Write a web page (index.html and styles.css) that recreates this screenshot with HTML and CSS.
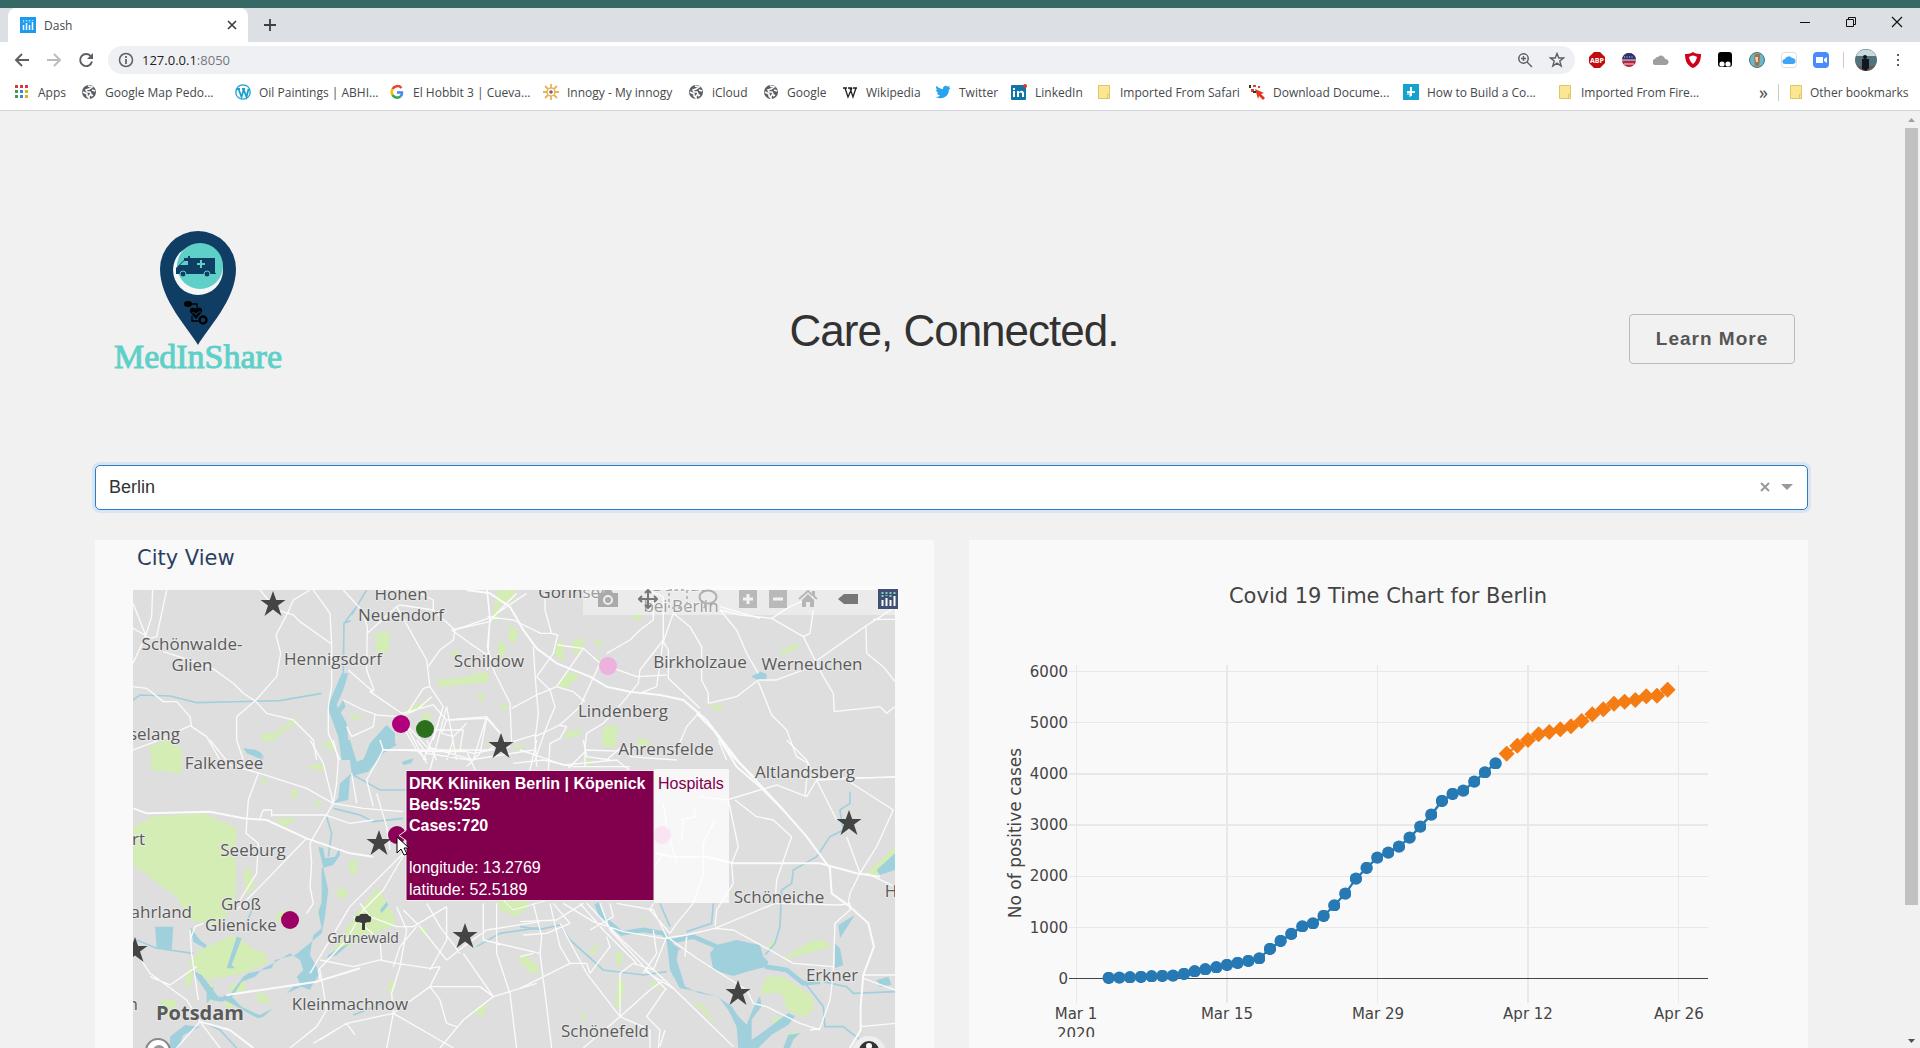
FILE: index.html
```html
<!DOCTYPE html>
<html lang="en">
<head>
<meta charset="utf-8">
<title>Dash</title>
<link rel="stylesheet" href="styles.css">
</head>
<body>
<svg class="defs" width="0" height="0" aria-hidden="true">
  <defs>
    <symbol id="globe" viewBox="0 0 16 16"><circle cx="8" cy="8" r="7" fill="#5b5e63"/><path d="M7 2 11 3 8 5 5 6 6 8 9 8 10 10 8 12 8 14 6 12 6 10 2 8M11 6 14 7M10 12 12 11" fill="none" stroke="#fff" stroke-width="1.6"/></symbol>
    <symbol id="folder" viewBox="0 0 16 16"><path d="M2.500 1.500h11v13h-11z" fill="#fbe694" stroke="#e0c765"/><path d="M11.500 14.500v-4h2v4z" fill="#fbe694" stroke="#e0c765"/></symbol>
    <symbol id="star" viewBox="-13 -13 26 26"><path d="M0-13 3.200-4H12.500L5 1.500 8.500 12 0 5.500-8.500 12-5 1.500-12.500-4H-3.200Z" fill="#444"/></symbol>
  </defs>
</svg>
<div class="desktop-strip"></div>
<header class="browser">
  <div class="tabs">
    <div class="tab">
      <svg width="16" height="16" viewBox="0 0 16 16"><path fill="#1c9af0" d="M0 0h16v16H0z"/><path stroke="#fff" stroke-width="1.500" d="M3.500 8v5M6.500 6v7M9.500 8v5M12.500 5v8"/><path stroke="#9fe6ff" stroke-width="1.500" stroke-dasharray="1.500 1" d="M3.500 3v3M6.500 3v2M9.500 3v3M12.500 3v1"/></svg>
      <span class="tab-title">Dash</span>
      <button class="bare" aria-label="Close tab"><svg width="16" height="16" viewBox="0 0 16 16"><path d="M4 4l8 8M12 4l-8 8" stroke="#3c4043" stroke-width="1.700"/></svg></button>
    </div>
    <button class="bare new-tab" aria-label="New tab"><svg width="16" height="16" viewBox="0 0 16 16"><path d="M8 2v12M2 8h12" stroke="#3c4043" stroke-width="1.800"/></svg></button>
    <div class="window-controls">
      <button class="bare" aria-label="Minimize"><svg width="14" height="14" viewBox="0 0 14 14"><path d="M2 7.500h10" stroke="#111"/></svg></button>
      <button class="bare" aria-label="Restore"><svg width="14" height="14" viewBox="0 0 14 14"><path d="M2.500 4.500h7v7h-7zM4.500 4.500v-2h7v7h-2" fill="none" stroke="#111"/></svg></button>
      <button class="bare" aria-label="Close"><svg width="14" height="14" viewBox="0 0 14 14"><path d="M2 2l10 10M12 2L2 12" stroke="#111" stroke-width="1.200"/></svg></button>
    </div>
  </div>
  <div class="toolbar">
    <div class="nav">
      <button class="bare" aria-label="Back"><svg width="16" height="16" viewBox="0 0 16 16"><path d="M15 8H2M8 2 2 8l6 6" fill="none" stroke="#5b5e63" stroke-width="1.900"/></svg></button>
      <button class="bare" aria-label="Forward"><svg width="16" height="16" viewBox="0 0 16 16"><path d="M1 8h13M8 2l6 6-6 6" fill="none" stroke="#b9bbbe" stroke-width="1.900"/></svg></button>
      <button class="bare" aria-label="Reload"><svg width="16" height="16" viewBox="0 0 16 16"><path d="M13 4.500A6 6 0 1 0 14 9.500" fill="none" stroke="#5b5e63" stroke-width="1.900"/><path d="M15 1v6H9z" fill="#5b5e63"/></svg></button>
    </div>
    <div class="address">
      <svg width="16" height="16" viewBox="0 0 16 16"><circle cx="8" cy="8" r="6.500" fill="none" stroke="#5b5e63" stroke-width="1.500"/><path d="M8 7v5M8 4v2" stroke="#5b5e63" stroke-width="1.700"/></svg>
      <span class="url">127.0.0.1<span class="port">:8050</span></span>
      <button class="bare" aria-label="Zoom"><svg width="16" height="16" viewBox="0 0 16 16"><circle cx="6.500" cy="6.500" r="4.700" fill="none" stroke="#5b5e63" stroke-width="1.500"/><path d="M10 10l5 5M4 6.500h5M6.500 4v5" stroke="#5b5e63" stroke-width="1.400"/></svg></button>
      <button class="bare" aria-label="Bookmark this page"><svg width="16" height="16" viewBox="0 0 16 16"><path d="M8 1.500 9.800 6h4.700l-3.700 3 1.400 5L8 11.200 3.800 14l1.400-5L1.500 6h4.700z" fill="none" stroke="#5b5e63" stroke-width="1.400"/></svg></button>
    </div>
    <div class="extensions">
      <svg viewBox="0 0 16 16"><path d="M5 0h6l5 5v6l-5 5H5l-5-5V5z" fill="#c00d0d"/><text x="8" y="11" font-size="7" font-weight="700" fill="#fff" text-anchor="middle">ABP</text></svg>
      <svg viewBox="0 0 16 16"><circle cx="8" cy="8" r="7" fill="#b2273f"/><path d="M1 8a7 7 0 0 1 14 0z" fill="#2c3470"/><path d="M1 8h14M3 12h10" stroke="#e5e0ee"/><path d="M3 5h10" stroke="#e5e0ee" stroke-dasharray="1 1.500"/></svg>
      <svg viewBox="0 0 16 16"><path d="M3 13a3 3 0 0 1-1-6 3 3 0 0 1 3-2 4 4 0 0 1 7 2 3 3 0 0 1 1 6z" fill="#9e9e9e"/></svg>
      <svg viewBox="0 0 16 16"><path d="M8 0C11 2 14 2 16 2 16 10 13 14 8 16 3 14 0 10 0 2 2 2 5 2 8 0z" fill="#d0021b"/><path d="M4 5Q8 2 12 5 11 10 8 12 5 10 4 5z" fill="#fff"/></svg>
      <svg viewBox="0 0 16 16"><rect x="1" width="14" height="15" rx="3" fill="#000"/><circle cx="5" cy="12" r="2.600" fill="#fff"/><circle cx="11" cy="12" r="2.600" fill="#fff"/></svg>
      <svg viewBox="0 0 16 16"><circle cx="8" cy="8" r="7.500" fill="#6ab7c8" stroke="#4a7078"/><path d="M6 2h5v5l-1 7H6L5 5z" fill="#a5744f"/><path d="M6 5h3v5H7z" fill="#e4d7b6"/></svg>
      <svg viewBox="0 0 16 16"><rect x=".5" y=".5" width="15" height="15" rx="3" fill="#fff" stroke="#ddd"/><path d="M4 12a2.500 2.500 0 0 1 0-5 4 4 0 0 1 7-1 3 3 0 0 1 1 6z" fill="#41a5f5"/></svg>
      <svg viewBox="0 0 16 16"><rect width="16" height="16" rx="4" fill="#4a8cf7"/><path d="M3 5h7v6H3zM11 7l3-2v6l-3-2z" fill="#fff"/></svg>
    </div>
    <div class="profile">
      <svg width="22" height="22" viewBox="0 0 22 22"><circle cx="11" cy="11" r="11" fill="#52727c"/><path d="M1 7a11 11 0 0 1 20 0z" fill="#c8dadb"/><path d="M2 17h18a11 11 0 0 1-18 0z" fill="#6b5a4c"/><circle cx="10" cy="8" r="2" fill="#111"/><path d="M7 10h7v9l-3 3-4-2z" fill="#111722"/></svg>
      <button class="bare" aria-label="Menu"><svg width="16" height="16" viewBox="0 0 16 16"><path d="M7 2h2v2H7zM7 7h2v2H7zM7 12h2v2H7z" fill="#5b5e63"/></svg></button>
    </div>
  </div>
  <nav class="bookmarks">
    <a href="#"><svg viewBox="0 0 16 16"><path d="M1 1h3v3H1zM6 1h3v3H6zM11 1h3v3h-3z" fill="#d9363e"/><path d="M1 6h3v3H1zM1 11h3v3H1z" fill="#3a9b55"/><path d="M6 6h3v3H6zM6 11h3v3H6z" fill="#3b86d8"/><path d="M11 6h3v3h-3zM11 11h3v3h-3z" fill="#e2ae1c"/></svg>Apps</a>
    <a href="#"><svg><use href="#globe"/></svg>Google Map Pedo...</a>
    <a href="#"><svg viewBox="0 0 16 16"><circle cx="8" cy="8" r="7.200" fill="#fff" stroke="#1ea0cf" stroke-width="1.300"/><path d="M2 5h3M3.500 5l3 8 2-7M7 5h3M8.500 5l3 8 2-8" fill="none" stroke="#1ea0cf" stroke-width="1.800"/></svg>Oil Paintings | ABHI...</a>
    <a href="#"><svg viewBox="0 0 16 16" fill="none" stroke-width="2.500"><path d="M12.500 4A5.500 5.500 0 0 0 3.500 5" stroke="#ea4335"/><path d="M3.500 5a6 6 0 0 0 0 6" stroke="#fbbc05"/><path d="M3.500 11a5.500 5.500 0 0 0 8 1.500" stroke="#34a853"/><path d="M11.500 12.500A5 5 0 0 0 13 8.500H8" stroke="#4285f4"/></svg>El Hobbit 3 | Cueva...</a>
    <a href="#"><svg viewBox="0 0 16 16"><path d="M8 0v16M0 8h16M2 2l12 12M14 2 2 14" stroke="#eab15c" stroke-width="1.800"/><circle cx="8" cy="8" r="4" fill="#fff" stroke="#eab15c" stroke-width="1.500"/><circle cx="8" cy="8" r="1.800" fill="#776a62"/></svg>Innogy - My innogy</a>
    <a href="#"><svg><use href="#globe"/></svg>iCloud</a>
    <a href="#"><svg><use href="#globe"/></svg>Google</a>
    <a href="#"><svg viewBox="0 0 16 16"><path d="M1 4h4M6 4h4M11 4h4M3 4l3 9 4-9M8 4l3 9 3-9" fill="none" stroke="#222" stroke-width="1.300"/></svg>Wikipedia</a>
    <a href="#"><svg viewBox="0 0 16 16"><path d="M15.500 4q-1 1-1.500 1.500C14 12 8 16.500.500 13q3 0 4.500-1.500Q2.500 11 2 9h1.500Q1 8 1 5.500l1.500.5Q0 4 1.500 2 4 5 8 5.200C7.500 1 12 1 13 2.800l2-1-1 2z" fill="#2aa3ef"/></svg>Twitter</a>
    <a href="#"><svg viewBox="0 0 16 16"><rect y="1" width="15" height="15" rx="1" fill="#0f76a8"/><path d="M2 7h2v6H2zM2 4h2v2H2zM6 7h2v1q4-3 5 1v4h-2V9q-2-1-3 0v4H6z" fill="#fff"/><circle cx="14" cy="2" r="2" fill="#d9333b"/></svg>LinkedIn</a>
    <a href="#"><svg><use href="#folder"/></svg>Imported From Safari</a>
    <a href="#"><svg viewBox="0 0 16 16"><path d="M6 5l9 4-3 1 4 4-2 2-4-4-1 3z" fill="#df3a20"/><path d="M4 1h3v2H4zM9 2h2v2H9zM2 5h3v3H2z" fill="#e04030"/><path d="M0 1h2v3H0zM4 7h3v2H4z" fill="#333"/></svg>Download Docume...</a>
    <a href="#"><svg viewBox="0 0 16 16"><path d="M0 0h16v16H0z" fill="#14a3cc"/><path d="M8 3v9M4 8h8" stroke="#fff" stroke-width="2"/><path d="M4 10h3v3" fill="none" stroke="#fff"/></svg>How to Build a Co...</a>
    <a href="#"><svg><use href="#folder"/></svg>Imported From Fire...</a>
    <button class="bare more" aria-label="More bookmarks">»</button>
    <a href="#" class="other"><svg><use href="#folder"/></svg>Other bookmarks</a>
  </nav>
</header>
<div class="viewport">
  <main class="page">
    <section class="hero">
      <svg class="logo" width="170" height="146" viewBox="0 0 170 146" role="img" aria-label="MedInShare logo">
        <path d="M85 115C76 99 47 70 47 39a38 38 0 0 1 76 0C123 70 94 99 85 115z" fill="#0f3d63"/>
        <circle cx="85" cy="40" r="25" fill="#f5f7f7"/><circle cx="87" cy="36" r="23" fill="#5fd0c8"/>
        <path d="M63 43V38l8-8V28H75V26H77V28L102 28V43H103V44H63z" fill="#0f3d63"/><path d="M67 35l4-4h4v4z" fill="#5fd0c8"/><path d="M88 30v8M84 34h8" stroke="#5fd0c8" stroke-width="2"/>
        <circle cx="70" cy="44" r="3" fill="#0f3d63" stroke="#5fd0c8"/><circle cx="94" cy="44" r="3" fill="#0f3d63" stroke="#5fd0c8"/>
        <ellipse cx="75" cy="74" rx="4" ry="3"/><path d="M78 74h6v5M79 86v5h6" fill="none" stroke="#000" stroke-width="1.300"/><path d="M83 89l-6-7c-1-5 4-5 6-3 2-2 7-2 6 3z"/><path d="M79 83h3l1 2 2-3h3" stroke="#0f3d63" fill="none"/><circle cx="90" cy="90" r="3.500" fill="#0f3d63" stroke="#000" stroke-width="2.500"/>
        <text x="85" y="138" text-anchor="middle" class="logo-text">MedInShare</text>
      </svg>
      <h1>Care, Connected.</h1>
      <button class="learn-more">Learn More</button>
    </section>
    <div class="picker">
      <select aria-label="City"><option>Berlin</option></select>
      <button class="bare" aria-label="Clear"><svg width="12" height="12" viewBox="0 0 12 12"><path d="M2 2l8 8M10 2l-8 8" stroke="#999" stroke-width="2"/></svg></button>
      <svg width="12" height="6" viewBox="0 0 12 6"><path d="M0 0h12L6 6z" fill="#999"/></svg>
    </div>
    <div class="cards">
      <section class="card map-card">
        <h2>City View</h2>
        <div class="map">
          <svg viewBox="0 0 762 458" class="map-art">
            <path d="M0 0h762v458H0z" fill="#dedede"/>
            <g class="green">
              <path transform="translate(-53 -150) scale(.3333)" d="M885 580 930 574 925 640 890 640zM1255 450h50v25l-45 20-10 50-15-10zM1290 555l25 15-10 40-20-10zM1260 600l20 20-15 45-15-10zM1110 640l30-10-10 40zM1070 720l60-5 95-20v30l-150 15zM1190 760l25 5-10 25zM1260 790l35 15-30 5zM975 810l70-30-15 20-50 25zM1030 820l25 0v15l-30 8zM805 820l50 10-30 10zM545 880l40 0 65-50v15l-45 35-30 25-30-5zM720 905l45 5-5 25zM210 925l50-25 45 40v60l-90-10zM1205 890l25 20 10 20zM1300 915l40 0-30 15zM1110 925h30v10z"/>
              <path transform="translate(267 -10) scale(.3333)" d="M470 185l20 0v60l-25-20zM520 180l35-5-15 50-25-15zM580 185l30-10-15 25zM590 230l10-8v15zM500 275l40 10-40 40-30-5zM695 110l40-15-25 30zM925 370l40 10 5 15-25-5zM490 460l60-15-20 25-35 5zM610 440l45-5-10 70-40-5zM715 470l45 20-50 10zM560 520l20 50-20-20z"/>
              <path transform="translate(367 -60) scale(.3333)" d="M835 365l55-25 10 10-50 25z"/>
              <path transform="translate(-13 150) scale(.3333)" d="M40 260 100 228 250 220 350 265 345 500 290 555 210 540 170 470 40 375zM240 630l100-45 65 45 35 10v30l-70 30-110 20-55-50zM200 690l20 0-10 50-15-5zM470 520l30-10v30l-30 5zM725 500l50-60 50 95 0 20-50 20-100 50-40 10zM555 80l55-10v25zM515 150l20 0-10 30-10-10zM580 185l30 0-15 15zM420 110l20 10-10 20zM470 235l60 0-40 30zM685 365l30-5-10 50-20-20zM645 460l20-20 20 20-20 20zM370 400l20-20 15 60-25 25zM120 780l50 0-15 60-30-20zM330 735l50-10-10 30-40 5zM255 740l20-15 10 50-15 10zM410 760h20l25 25-40 5zM310 790l40-10-20 30zM805 720l15 5v40l-15-15zM895 565l25-5-5 30zM1130 480h95v20l-35 30-50-20zM1190 660l20-10 50 30-20 10zM1065 805l35-20-10 45-20-10zM90 20l50-20 50 30-10 30-80-5zM620 0l20 10 0 20z"/>
              <path transform="translate(387 150) scale(.3333)" d="M720 760l20-50 50 0 90 60 0 40-30 20-50-20-15-50zM790 655l80-50 40-5 25 20-60 15-70 20zM1040 400l85-80v30l-55 55zM200 640l35-30-5 30zM280 640l30 0-10 50zM295 705l20 30-15 70-15-5zM390 715l35 30-30-5zM0 640l25 10 35 50-35-5zM515 785l35 10 45 65-35-35zM175 810l25 25-10 10zM750 840l50-15-30 30zM800 880l35-5-20 35zM370 530l15 15-15 5zM740 620l20-20 5 20zM0 490l20 0-10 30z"/>
            </g>
            <g class="water">
              <path transform="translate(-53 -150) scale(.3333)" d="M785 700 805 700 790 750 770 795 800 850 805 900 822 960 785 960 775 890 742 800 760 760zM920 855 945 880 945 915 905 935 890 960 850 960 870 910zM790 780 797 800 780 820 770 810zM490 925 530 930 550 960 500 940z"/>
              <path class="line" transform="translate(-53 -150) scale(.3333)" d="M860 450 830 500 792 550 790 700M159 780 180 765 270 768 350 788 600 782 725 760M830 500l-15 25M792 550l20-8"/>
              <path transform="translate(367 -60) scale(.3333)" d="M753 440 780 425 800 432 800 450 775 450z"/>
              <path transform="translate(-13 150) scale(.3333)" d="M660 0 690 60 695 100 660 130 655 175 640 190 685 180 690 110 745 95 790 40 830 15 820 0 760 0 750 50 710 65 690 0zM595 320l15 5 5 30 30-5 15-30v25l-20 30-35 10 0 60 0 40-10 30 10 50-25 20-10 60 30 55-20 30-10 20-25-10-15-30 20-20-10-30-30-20-50 30-30 15-25 25-40 15-30 50-30 10-30-5-60-90 30 15 50 65 30 0 45-60 15-10 70-15 10-25 60-15 50-40 30-25 10-50 10-80zM105 560l55 0-5 70-45-5zM210 560l30 40 20 15-5 10-35-20zM350 590l15 5-30 80 10 10-25 0zM260 755l20-15 0 30-20 20zM310 765l30 10 25 25 40 20 15 5 40-20-30 25-15 5-30-15-70-40zM500 760l20-20 35-5zM625 645l30-20 35-15-40 35-30 10zM780 510l20-25 5 10-20 25zM845 65l35-10-5 15-25 5zM150 890l45-35 45 5-50 25-15 39-25 0zM370 25l50 10 15 20-20-10z"/>
              <path class="line" transform="translate(-13 150) scale(.3333)" d="M700 105 780 150 860 150M640 205 720 225 760 245 850 235M620 230 635 280 625 350M50 600 110 625 220 640M1070 620 1140 580 1260 563M250 845 300 870 350 924M700 825 790 790M375 560l25-60"/>
              <path transform="translate(387 150) scale(.3333)" d="M570 640 590 615 650 600 720 615 730 650 745 665 740 680 680 695 640 708 580 690zM440 600l10 90 30 55 60 10 55 15 30 40 25 50 5 64 60 0 40-40 50-30 20-25-20-10-80 60-30 20 0-60 30-40-5-30-20 35-20 50-25-25-20-30-45-30-55-10-40-20-25-80 5-30 10 0zM955 555l50-30-45 70zM945 610l15 15 10 50-25 10zM1070 720l35-10 10 25-35 5zM1070 390l55-50v50l-45 15zM790 924l15-40 35-5-20 20-10 25z"/>
              <path class="line wide" transform="translate(387 150) scale(.3333)" d="M230 490 245 530 305 580 370 570 430 580 450 605 520 590 590 620M735 680 800 690 850 730 900 725"/>
              <path class="line" transform="translate(387 150) scale(.3333)" d="M0 560 60 568 120 555 150 600 250 690 370 705 440 695M990 155 990 190 960 210 970 270 930 290 890 350 820 390 815 430 785 450 780 560 765 610 735 645M420 490 450 560M580 490 575 550 500 575M860 735 910 800 915 860 970 860 1020 900M910 725 980 740 1000 760 1125 755"/>
            </g>
            <g class="roads">
              <path transform="translate(-53 -150) scale(.3333)" d="M218 450 215 530 196 590 159 670M260 450 230 590 212 595 159 565M540 450 590 510 640 525 660 545 755 612M690 450 640 480 625 515 588 585 602 640 590 710 528 780 470 830 470 900 490 960M700 450 750 520 755 610 755 740 745 800 745 880 780 960M790 450 845 510 862 560 860 690 882 750 870 755 965 820M250 635 390 680 460 730 490 760 528 785 560 820 640 840 700 900 710 960M159 740 200 745 250 785 290 785 330 830 335 860 380 890 420 960M159 930 240 900 335 855M862 580 950 500 960 495 1060 510 1125 570M950 500 1040 660 1050 740 1090 800 1060 900M1125 570 1240 530 1310 460M1125 570 1120 600 1080 630 1045 680M1060 510 1060 480 1020 460M805 690 880 755M790 780 850 810 890 825 960 830 1010 810 1055 770M885 825 880 860 815 890 800 860M965 820 1060 795 1100 840 1220 830 1262 880M1100 840 1085 880 1120 890 1160 850M1050 740 1030 745 985 815M1090 800 1060 890 1030 960M1100 800 1130 960M975 870 1010 930 1040 960M975 850 1040 920 1180 960M1220 830 1180 960M905 930h320l50-30M1220 450 1230 530 1222 690M159 490l40 100"/>
              <path class="major" transform="translate(267 -10) scale(.3333)" d="M200 30 270 40 330 80 370 150 410 205 470 250 570 290 620 320 690 335 780 345 850 360 920 420 1020 550 1070 600"/>
              <path transform="translate(267 -10) scale(.3333)" d="M262 30 270 120 262 200 285 280 330 370 335 490M435 40 435 90 455 160 422 160 340 120 262 110M155 150 210 190 262 225M155 150 270 125 290 100 380 40M455 160 473 165 460 220 410 290M473 195 550 205 600 250 710 290 800 285M600 250 540 380 480 435 405 470 410 560M550 205 470 320 410 345 335 385M400 200 405 280 410 345 415 400 405 480M410 290 450 330 465 380 440 440 405 540M470 320 520 335 555 365M740 30 790 50 790 180 770 320 720 340M760 50 760 120 720 150 690 180 620 220M790 180 720 270 715 310 640 400 610 430 560 460 555 500 555 560M820 100 870 140 905 200 905 300 925 340 925 370M820 100 790 185 805 210 805 295 900 385M925 370 1010 350 1075 300M900 395 860 440 830 510M960 90 1010 150 1040 220 1075 280M960 80 1080 115M475 435 500 440 480 475 450 490 445 570M505 565 560 510 700 515M340 485 405 465M150 420 260 415 240 520 200 560M260 415 300 460M140 380 90 570M100 450 190 450 180 510 220 520 330 500M0 510 90 515 200 515M20 440 80 550M200 515 240 600M340 550 430 540 520 560 690 560"/>
              <path transform="translate(367 -60) scale(.3333)" d="M660 240 720 255 815 265 910 320 940 380 970 440 1000 490 1003 545 1140 530 1160 550 1185 530M815 265 870 230 940 200M1180 235 1095 290 910 420 830 450 775 450M910 320 930 310 940 240M1098 290 1100 370 1150 410 1185 455M1120 268 1185 268M775 455 815 555 860 600 890 680 925 700 905 745 1185 742M925 700 915 800"/>
              <path class="major" transform="translate(367 -60) scale(.3333)" d="M590 550 640 600 690 670 790 775 850 840"/>
              <path class="major" transform="translate(-13 150) scale(.3333)" d="M40 205 80 220 270 215 370 235 440 240 560 295 690 340 760 350M320 765 590 725 720 685M240 845 330 870 400 924"/>
              <path transform="translate(-13 150) scale(.3333)" d="M270 0 330 75 420 100 560 145 640 190 730 205 850 215M415 100 385 180 378 280 415 310 410 400 360 480M420 235 430 210 455 210 455 230M455 225 615 225 690 250 760 240M570 0 610 70 640 190 610 240 570 310 575 370 570 440 580 490 560 520M560 295 420 440 350 510M640 0 655 60 650 130 640 190M695 100 710 190M780 0 790 30 740 120 760 200M790 30 890 30M860 330 790 450 730 510 680 600 595 690 600 720M770 160 800 260 810 330M890 0 920 40 1050 60 1240 30M920 0 950 60M1000 0 980 60M850 340 690 500 570 700M40 625 90 700 200 780 240 845 170 924M210 570 215 640 235 780M90 710 150 735 230 680M250 550 225 560 210 600M240 845 300 924M600 660 700 680 780 660 830 670 930 685 960 680M600 690 620 810 590 860 510 924M830 500 860 570 840 680 815 760 820 820 800 924M850 510 900 560 980 660 1030 620 1100 570 1260 545M720 490 750 530 830 560 880 560 980 500M920 490 960 560 1020 640M1090 490 1090 600 1260 640M1130 490 1130 640 1170 760 1190 924M980 500 980 600 930 690M890 560 840 620 820 680M960 680 930 740 820 820 680 850 600 900M930 740 960 780 980 850 1010 860M930 740 1080 740 1120 770 1030 840 960 924M1120 770 1250 730M1030 640 1120 770M820 820 1000 924M680 850 705 885M785 660 780 600 700 530M655 865 580 910"/>
              <path class="major" transform="translate(387 150) scale(.3333)" d="M600 0 650 80 720 140 790 210 860 290 930 385 935 460 990 500 1045 550 1062 620 1030 705 1022 800 1022 870 990 924M405 340 460 350 560 350 640 370 900 370 1010 400 1080 410"/>
              <path transform="translate(387 150) scale(.3333)" d="M800 0 860 60 950 240M0 30 60 50 130 75 290 60 340 100M190 0 200 50 270 60M50 0 30 90M260 60 300 25 360 25M330 50 470 60M890 120 860 170 770 135 620 180 540 170M620 60 595 0M890 120 1125 110M980 120 1120 210 1070 320 1020 400 990 460 985 490M980 290 1020 400M645 180 710 230 760 240 815 290 770 420 765 490 585 565M430 190 440 260 470 370M625 180 655 320 635 370 640 430 590 510 585 560M585 240 550 310 550 400 520 490M490 240 485 300M520 200 530 230 480 240M430 340 405 380M765 490 960 495 990 490 990 510 945 550 940 700 930 780 900 865 870 870M585 565 500 585 430 595 310 575 220 545 130 490M585 565 640 570 750 630 820 670 940 680M200 490 300 595 460 745 640 920M240 490 270 570 390 700 440 750M290 490 400 510 440 590 530 655 680 750 700 790 740 800 840 850 900 870M270 490 280 530 210 570M180 490 250 570 350 670M0 545 110 540 190 490M10 585 80 580 150 550 100 490M40 490 65 590 60 640 80 800 95 924M90 490 120 620 150 670 0 745M120 550 200 700 300 830M150 670 200 670 210 700 270 620 260 590M300 830 300 700 340 670 400 690 440 590M400 570 410 640 370 700M300 830 190 924M300 830 390 870 390 924M420 920 435 870M300 830 390 750 430 720M460 745 370 690M400 490 390 510 450 580 470 550 520 490M500 590 495 650M1040 400 1125 440M1030 705 1125 705M1030 715 1125 750M1022 860 1125 850M40 640 0 650M435 750 380 830 420 870 415 924"/>
              <path class="faint" d="M280 290l30-20 40 40 40-20 60 20M350 290l30 30 70-20"/>
            </g>
            <g class="labels">
              <text x="268" y="10">Hohen</text><text x="268" y="31">Neuendorf</text>
              <text x="59" y="60">Schönwalde-</text><text x="59" y="81">Glien</text>
              <text x="200" y="75">Hennigsdorf</text><text x="356" y="77">Schildow</text>
              <text x="47" y="150" class="end">selang</text><text x="91" y="179">Falkensee</text>
              <text x="441" y="8">Gorinsee</text><text x="548" y="1">Bernau</text><text x="548" y="22">bei Berlin</text>
              <text x="567" y="78">Birkholzaue</text><text x="679" y="80">Werneuchen</text>
              <text x="490" y="127">Lindenberg</text><text x="533" y="165">Ahrensfelde</text>
              <text x="672" y="188">Altlandsberg</text><text x="120" y="266">Seeburg</text>
              <text x="12" y="255" class="end">rt</text><text x="108" y="320">Groß</text><text x="108" y="341">Glienicke</text>
              <text x="59" y="328" class="end">ahrland</text><text x="230" y="353" class="small">Grunewald</text>
              <text x="217" y="420">Kleinmachnow</text><text x="67" y="430" class="city">Potsdam</text>
              <text x="5" y="420" class="end">n</text><text x="646" y="313">Schöneiche</text>
              <text x="758" y="307">H</text><text x="699" y="391">Erkner</text><text x="472" y="447">Schönefeld</text>
            </g>
            <path d="M229 340v-7l-4-1q-3 1-3-3 1-4 4-3 1-3 5-2 4-1 5 2 3 0 2 4 0 3-3 2l-3 1v7z" fill="#3c3c3c"/>
            <g>
              <use href="#star" x="127" y="1" width="26" height="26"/><use href="#star" x="355" y="143" width="26" height="26"/>
              <use href="#star" x="233" y="240" width="26" height="26"/><use href="#star" x="319" y="333" width="26" height="26"/>
              <use href="#star" x="-11" y="347" width="26" height="26"/><use href="#star" x="703" y="220" width="26" height="26"/>
              <use href="#star" x="592" y="390" width="26" height="26"/>
              <circle cx="268" cy="134" r="9" fill="#b0007c"/><circle cx="292" cy="139" r="9" fill="#2a6f1c"/>
              <circle cx="475" cy="76" r="9" fill="#eeb0dc"/><circle cx="529" cy="245" r="9" fill="#ea90cc"/>
              <circle cx="157" cy="330" r="9" fill="#9c0064"/><circle cx="264" cy="245" r="9" fill="#8c0058"/>
              <circle cx="25" cy="461" r="12" fill="#fff" stroke="#888" stroke-width="2"/><circle cx="26" cy="461" r="6" fill="#999"/>
              <circle cx="736" cy="463" r="17" fill="#eee"/><circle cx="736" cy="461" r="10" fill="#333"/><circle cx="736" cy="456" r="3" fill="#fff"/>
            </g>
            <path d="M521 179h75v134h-75z" fill="#fff" fill-opacity=".75"/>
            <path d="M273 180.500h248v130H273v-60l-7-5 7-5z" fill="#80004d" stroke="#eee"/>
            <g class="hover">
              <g class="strong"><text x="276" y="199">DRK Kliniken Berlin | Köpenick</text><text x="276" y="220">Beds:525</text><text x="276" y="241">Cases:720</text></g>
              <text x="276" y="283">longitude: 13.2769</text><text x="276" y="305">latitude: 52.5189</text>
              <text x="525" y="199" class="trace">Hospitals</text>
            </g>
            <path d="M264 247v16l4-4 3 6 3-1-3-6h5z" fill="#fff" stroke="#000"/>
          </svg>
          <div class="modebar">
            <div class="group"><button class="bare" aria-label="Download plot"><svg viewBox="0 0 20 20"><path d="M0 4h5l2-3h6l2 3h5v14H0z" fill="#aaa"/><circle cx="10" cy="11" r="4" fill="none" stroke="#eee" stroke-width="2"/></svg></button></div>
            <div class="group">
              <button class="bare" aria-label="Pan"><svg viewBox="0 0 20 20"><path d="M10 1v18M1 10h18M7 4l3-3 3 3M7 16l3 3 3-3M4 7l-3 3 3 3M16 7l3 3-3 3" stroke="#777" stroke-width="2" fill="none"/></svg></button>
              <button class="bare" aria-label="Box select"><svg viewBox="0 0 20 20"><path d="M1 1h18v18H1z" stroke="#bbb" stroke-width="2" stroke-dasharray="3 3" fill="none"/></svg></button>
              <button class="bare" aria-label="Lasso select"><svg viewBox="0 0 20 20"><ellipse cx="10" cy="8" rx="8.500" ry="6.500" stroke="#b0b0b0" stroke-width="2" fill="none"/><path d="M5 13q4 1 1 6" stroke="#b0b0b0" stroke-width="2" fill="none"/></svg></button>
            </div>
            <div class="group">
              <button class="bare" aria-label="Zoom in"><svg viewBox="0 0 20 20"><path d="M1 1h18v18H1z" fill="#b9b9b9"/><path d="M10 5v10M5 10h10" stroke="#f2f2f2" stroke-width="3"/></svg></button>
              <button class="bare" aria-label="Zoom out"><svg viewBox="0 0 20 20"><path d="M1 1h18v18H1z" fill="#b9b9b9"/><path d="M5 10h10" stroke="#f2f2f2" stroke-width="3"/></svg></button>
              <button class="bare" aria-label="Reset view"><svg viewBox="0 0 20 20"><path d="M1 10l9-8 9 8" stroke="#b5b5b5" stroke-width="2" fill="none"/><path d="M14 2h3v5l-3-2zM4 11l6-6 6 6v7h-4v-5H8v5H4z" fill="#b5b5b5"/></svg></button>
            </div>
            <div class="group"><button class="bare" aria-label="Toggle hover"><svg viewBox="0 0 20 20"><path d="M0 10l6-5h14v10H6z" fill="#777"/></svg></button></div>
            <div class="group"><a href="#" aria-label="Plotly"><svg viewBox="0 0 20 20"><path d="M0 0h20v20H0z" fill="#3f4f75"/><path d="M4.500 11v6M8.500 9v8M12.500 11v6M16.500 7v10" stroke="#fff" stroke-width="2"/><path d="M4.500 3v6M8.500 3v4M12.500 3v6M16.500 3v2" stroke="#80cfbe" stroke-width="2" stroke-dasharray="2 1"/></svg></a></div>
          </div>
        </div>
      </section>
      <section class="card">
        <svg viewBox="0 0 839 497" class="chart">
          <defs>
            <marker id="dot" viewBox="-6 -6 12 12" markerWidth="37" markerHeight="37" markerUnits="userSpaceOnUse"><circle r="6" fill="#2679b2"/></marker>
            <marker id="diamond" viewBox="-8 -8 16 16" markerWidth="48" markerHeight="48" markerUnits="userSpaceOnUse"><path d="M0-8 8 0 0 8-8 0z" fill="#f57c13"/></marker>
          </defs>
          <text x="419" y="63" class="chart-title">Covid 19 Time Chart for Berlin</text>
          <path class="grid" d="M107.500 125v338M408.500 125v338M709.500 125v338M100 131.500h639M100 182.500h639M100 336.500h639M100 387.500h639"/>
          <path class="grid bold" d="M258 125v338M559 125v338M100 234h639M100 285h639"/>
          <path d="M100 438.500h639" stroke="#444"/>
          <g class="ticks y"><text x="99" y="137">6000</text><text x="99" y="188">5000</text><text x="99" y="239">4000</text><text x="99" y="290">3000</text><text x="99" y="341">2000</text><text x="99" y="393">1000</text><text x="99" y="444">0</text></g>
          <g class="ticks x"><text x="107" y="479">Mar 1</text><text x="107" y="499">2020</text><text x="258" y="479">Mar 15</text><text x="409" y="479">Mar 29</text><text x="559" y="479">Apr 12</text><text x="710" y="479">Apr 26</text></g>
          <text transform="translate(52 293) rotate(-90)" class="axis-title">No of positive cases</text>
          <polyline class="actual" transform="translate(11 0) scale(.3333)" points="386,1314 418,1313 450,1312 483,1311 515,1309 547,1308 579,1307 612,1302 644,1294 676,1288 709,1282 741,1275 773,1269 805,1263 838,1255 870,1227 902,1203 934,1182 967,1159 999,1150 1031,1128 1063,1096 1096,1061 1128,1016 1160,984 1192,953 1225,938 1257,920 1289,893 1321,860 1354,824 1386,783 1418,762 1450,752 1483,725 1515,697 1547,670"/>
          <polyline class="forecast" transform="translate(431 100) scale(.3333)" points="320,341 352,317 384,300 416,283 448,276 481,268 513,259 545,243 577,223 610,208 642,191 674,185 706,180 739,169 771,167 803,149"/>
        </svg>
      </section>
    </div>
  </main>
  <div class="scrollbar" aria-hidden="true">
    <svg width="7" height="4" viewBox="0 0 7 4"><path d="M0 4h7L3.500 0z" fill="#a0a0a0"/></svg>
    <div class="thumb"></div>
    <svg width="7" height="4" viewBox="0 0 7 4"><path d="M0 0h7L3.500 4z" fill="#505050"/></svg>
  </div>
</div>
</body>
</html>
```
FILE: styles.css
```css
* { box-sizing: border-box; }
body {
  margin: 0;
  height: 100vh;
  overflow: hidden;
  display: flex;
  flex-direction: column;
  background: #f1f1f1;
  font-family: "Liberation Sans", Arial, sans-serif;
}
svg { display: block; flex: none; }
.defs { position: absolute; }
.bare { border: 0; padding: 0; background: none; color: inherit; font: inherit; }

/* Browser frame */
.desktop-strip { flex: none; height: 8px; background: #366865; }
.browser {
  flex: none;
  background: #fff;
  border-bottom: 1px solid #d5d7dd;
  font: 12px "Open Sans", "Noto Sans", sans-serif;
  color: #45484c;
}
.tabs { display: flex; height: 34px; padding-left: 8px; background: #dcdfe3; }
.tab {
  display: flex;
  align-items: center;
  width: 240px;
  padding: 0 8px 0 12px;
  gap: 8px;
  background: #fff;
  border-radius: 8px 8px 0 0;
}
.tab-title { flex: 1; }
.new-tab { margin-left: 14px; }
.window-controls { display: flex; align-items: center; gap: 32px; margin-left: auto; padding: 0 16px 6px 0; }
.toolbar { display: flex; align-items: center; height: 36px; }
.nav { display: flex; gap: 16px; padding: 0 14px; }
.address {
  flex: 1;
  display: flex;
  align-items: center;
  height: 28px;
  padding: 0 10px;
  gap: 16px;
  border-radius: 14px;
  background: #eff0f4;
}
.url { flex: 1; margin-left: -8px; font-size: 13px; color: #222; }
.port { color: #74777b; }
.extensions { display: flex; gap: 16px; padding: 0 14px; }
.extensions svg { width: 16px; height: 16px; }
.profile { display: flex; align-items: center; gap: 13px; padding: 0 14px 0 12px; position: relative; }
.profile::before { content: ""; position: absolute; left: 0; top: 3px; width: 1px; height: 16px; background: #c8cacd; }
.bookmarks {
  display: grid;
  grid-template-columns: 67px 154px 154px 154px 145px 75px 79px 93px 76px 85px 153px 154px 154px 154px 1fr 142px;
  align-items: center;
  height: 32px;
  padding: 0 0 4px 14px;
}
.bookmarks a { display: flex; align-items: center; gap: 8px; color: inherit; text-decoration: none; white-space: nowrap; }
.bookmarks svg { width: 16px; height: 16px; }
.more { justify-self: end; padding-right: 10px; font-size: 18px; line-height: 16px; }
.bookmarks .other { padding-left: 9px; gap: 6px; border-left: 1px solid #c8cacd; }

/* Page */
.viewport { flex: 1; display: flex; min-height: 0; }
.page { flex: 1; min-width: 0; padding: 119px 97px 0 95px; }
.hero {
  display: grid;
  grid-template-columns: 1fr auto 1fr;
  align-items: start;
  height: 235px;
  padding: 0 13px 0 18px;
}
.logo-text { font: 34px "Liberation Serif", serif; fill: #5fd0c8; stroke: #5fd0c8; }
h1 { margin: 76px 0 0; font-size: 44px; line-height: 50px; font-weight: 400; letter-spacing: -1px; color: #323232; }
.learn-more {
  justify-self: end;
  width: 166px;
  height: 50px;
  margin-top: 84px;
  border: 1px solid #bbb;
  border-radius: 4px;
  background: transparent;
  font: 700 19px "Liberation Sans", Arial, sans-serif;
  letter-spacing: 1px;
  color: #555;
}
.picker {
  display: flex;
  align-items: center;
  gap: 10px;
  height: 45px;
  padding: 0 14px 2px 13px;
  border: 1px solid #2a7cc7;
  border-radius: 5px;
  background: #fff;
  box-shadow: 0 0 0 3px #d9e5f1;
}
.picker select { flex: 1; appearance: none; border: 0; padding: 0; background: none; outline: 0; font: 18px "Liberation Sans", Arial, sans-serif; color: #333; }
.cards { display: grid; grid-template-columns: 1fr 1fr; gap: 35px; margin-top: 30px; }
.card { min-height: 520px; background: #f9f9f9; }
.map-card { padding: 0 39px 0 38px; }
h2 { margin: 0; height: 50px; padding-left: 4px; font: 21px/36px "DejaVu Sans", Verdana, sans-serif; color: #2a3f5f; }
.map { position: relative; }
.map-art, .chart { width: 100%; }

/* Map */
.green { fill: #d3edb4; }
.water { fill: #a1d0dd; }
.water .line { fill: none; stroke: #a1d0dd; stroke-width: 5px; }
.water .wide { stroke-width: 14px; }
.roads { fill: none; stroke: #fbfbfb; stroke-width: 4px; stroke-linejoin: round; }
.roads .major { stroke-width: 6px; }
.roads .faint { stroke-width: 1px; }
.labels { font: 500 17px "Open Sans", "Noto Sans", sans-serif; text-anchor: middle; fill: #5a5a5a; stroke: #e8e8e8; stroke-width: 2px; paint-order: stroke; }
.labels .end { text-anchor: end; }
.labels .small { font-size: 14px; }
.labels .city { font-size: 20px; font-weight: 700; }
.hover { font: 16px "Liberation Sans", Arial, sans-serif; fill: #fff; }
.hover .strong { font-weight: 700; }
.hover .trace { fill: #80004d; }
.modebar { position: absolute; top: -4px; right: -3px; display: flex; align-items: center; gap: 20px; height: 29px; padding: 0 0 3px 15px; background: rgba(255, 255, 255, .4); }
.group { display: flex; gap: 10px; }
.modebar svg { width: 20px; height: 20px; }

/* Time chart */
.chart text { font-family: "DejaVu Sans", Verdana, sans-serif; fill: #444; }
.chart .chart-title { font-size: 21px; text-anchor: middle; }
.chart .axis-title { font-size: 17px; text-anchor: middle; }
.ticks { font-size: 15px; }
.ticks.y { text-anchor: end; }
.ticks.x { text-anchor: middle; }
.grid { stroke: #e8e8e8; }
.grid.bold { stroke-width: 2px; }
.actual { fill: none; stroke: #2679b2; stroke-width: 7px; marker: url(#dot); }
.forecast { fill: none; stroke: #f57c13; stroke-width: 7px; marker: url(#diamond); }

/* Scrollbar */
.scrollbar { flex: none; display: flex; flex-direction: column; align-items: center; width: 15px; padding: 7px 2px 5px 0; background: #f1f1f1; }
.thumb { width: 13px; flex: 0 1 84%; margin: 6px 0 auto; background: #c1c1c1; }
```
